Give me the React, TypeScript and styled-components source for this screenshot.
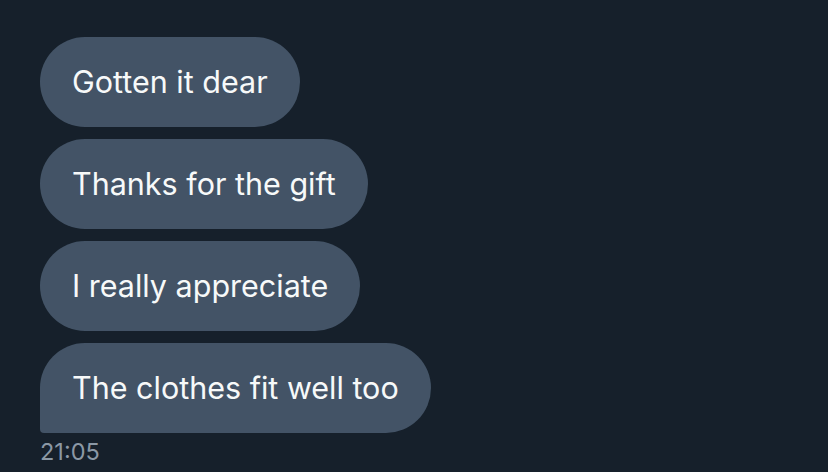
import React from "react";
import styled, { createGlobalStyle } from "styled-components";

const Global = createGlobalStyle`
  html, body { margin: 0; padding: 0; background: #16202b; }
  body { font-family: Inter, "Noto Sans", sans-serif; }
`;

const Page = styled.div`
  width: 828px;
  height: 472px;
  box-sizing: border-box;
  background: #16202b;
  padding: 37px 40px 0;
  display: flex;
  flex-direction: column;
  align-items: flex-start;
  gap: 12px;
  overflow: hidden;
`;

const Bubble = styled.div<{ $last?: boolean }>`
  background: #435366;
  color: #f7f9f9;
  font-size: 30.5px;
  line-height: 36px;
  height: 90px;
  box-sizing: border-box;
  padding: 27px 32px;
  border-radius: ${(p) => (p.$last ? "45px 45px 45px 4px" : "45px")};
  white-space: nowrap;
`;

const Time = styled.div`
  margin-top: -6px;
  color: #8b98a5;
  font-size: 23.5px;
  line-height: 26px;
`;

const messages = [
  "Gotten it dear",
  "Thanks for the gift",
  "I really appreciate",
  "The clothes fit well too",
];

export default function App() {
  return (
    <>
      <Global />
      <Page>
        {messages.map((m, i) => (
          <Bubble key={m} $last={i === messages.length - 1}>
            {m}
          </Bubble>
        ))}
        <Time>21:05</Time>
      </Page>
    </>
  );
}
